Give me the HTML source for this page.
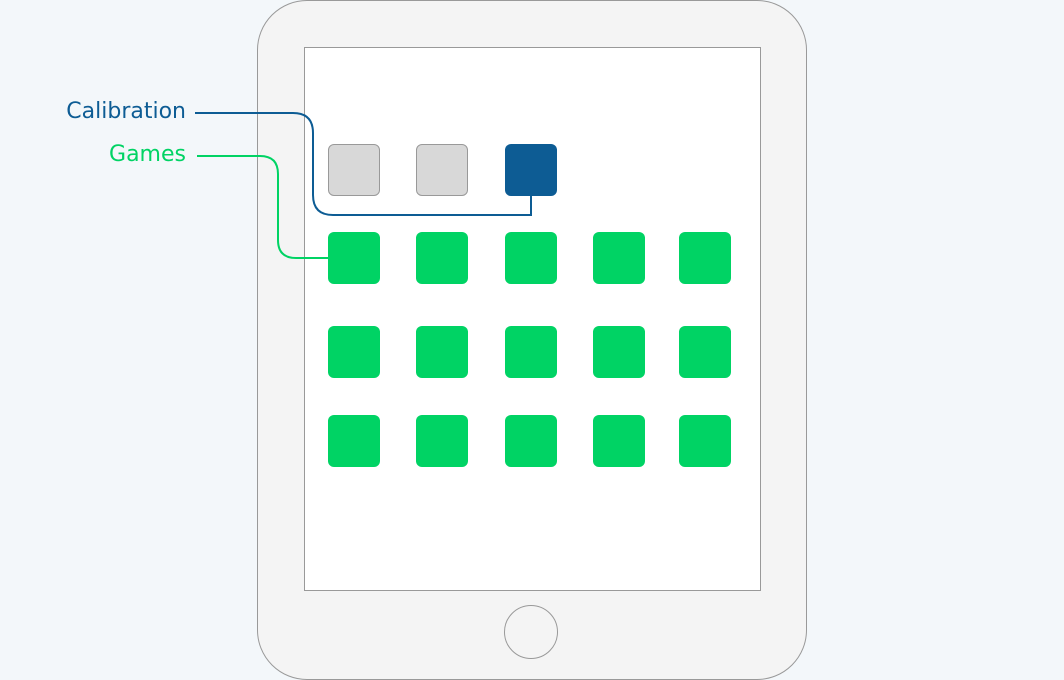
<!DOCTYPE html>
<html><head><style>
body{margin:0;width:1064px;height:680px;background:#f3f7fa;position:relative;overflow:hidden;font-family:"DejaVu Sans",sans-serif}
.dev{position:absolute;left:257px;top:0;width:548px;height:678px;border:1px solid #999;border-radius:50px;background:#f4f4f4}
.scr{position:absolute;left:304px;top:47px;width:455px;height:542px;border:1px solid #999;background:#fff}
.home{position:absolute;left:504px;top:605px;width:52px;height:52px;border:1px solid #999;border-radius:50%;background:#f4f4f4}
.t{position:absolute;width:52px;height:52px;border-radius:6px;background:#00d364}
.g{background:#d8d8d8;border:1px solid #999;width:50px;height:50px}
.b{background:#0d5c94}
.lbl{position:absolute;font-size:22px;text-align:right;width:180px;left:6px}
</style></head><body>
<div class="dev"></div><div class="scr"></div><div class="home"></div>
<div class="t g" style="left:328px;top:144px"></div>
<div class="t g" style="left:416px;top:144px"></div>
<div class="t b" style="left:505px;top:144px"></div>
<div class="t" style="left:328px;top:232px"></div><div class="t" style="left:416px;top:232px"></div><div class="t" style="left:505px;top:232px"></div><div class="t" style="left:593px;top:232px"></div><div class="t" style="left:679px;top:232px"></div>
<div class="t" style="left:328px;top:326px"></div><div class="t" style="left:416px;top:326px"></div><div class="t" style="left:505px;top:326px"></div><div class="t" style="left:593px;top:326px"></div><div class="t" style="left:679px;top:326px"></div>
<div class="t" style="left:328px;top:415px"></div><div class="t" style="left:416px;top:415px"></div><div class="t" style="left:505px;top:415px"></div><div class="t" style="left:593px;top:415px"></div><div class="t" style="left:679px;top:415px"></div>
<svg style="position:absolute;left:0;top:0" width="1064" height="680">
<path d="M195 113 H293 Q313 113 313 133 V195 Q313 215 333 215 H531 V196" fill="none" stroke="#0d5c94" stroke-width="2"/>
<path d="M197 156 H260 Q278 156 278 174 V240 Q278 258 296 258 H328" fill="none" stroke="#00d364" stroke-width="2"/>
</svg>
<div class="lbl" style="top:99px;color:#0d5c94">Calibration</div>
<div class="lbl" style="top:142px;color:#00d364">Games</div>
</body></html>
